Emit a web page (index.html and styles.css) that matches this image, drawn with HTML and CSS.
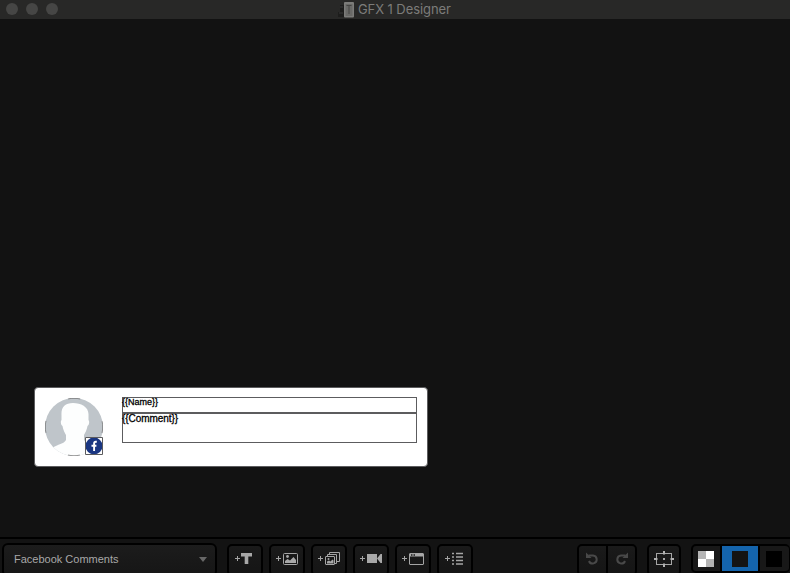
FILE: index.html
```html
<!DOCTYPE html>
<html lang="en">
<head>
<meta charset="utf-8">
<title>GFX 1 Designer</title>
<link rel="stylesheet" href="styles.css">
</head>
<body>
<div class="window">
  <header class="titlebar">
    <div class="lights"><i></i><i></i><i></i></div>
    <div class="title">
      <svg width="18" height="18" viewBox="0 0 18 18"><path d="M2 4h4v12H0v-5h2z" fill="#1d1d1c"/><path d="M2 6h3M1 12h4" stroke="#393938"/><rect x="6" y="1" width="10" height="15.500" rx="1" fill="#7c7c7a"/><rect x="7.500" y="3" width="7" height="12" fill="#696967"/><path d="M8.500 4.500h5M11 4v9" stroke="#444442"/></svg>
      <span>GFX 1 Designer</span>
    </div>
  </header>
  <main class="canvas">
    <section class="card">
      <svg class="avatar" width="58" height="58" viewBox="0 0 58 58">
        <defs><clipPath id="disc"><circle cx="29" cy="29" r="29"/></clipPath></defs>
        <g clip-path="url(#disc)">
          <path fill="#bfc5ca" d="M0 0h58v58H0z"/>
          <path fill="#fdfefe" d="M28 5c-8 0-12 4-11.500 12v5c-1 1-1 5 1 6 1 5 2.500 7 3.500 9v5c-2 4-8 4-14 8v9h46v-9c-6-4-12-4-14-8v-5c1-2 2.500-4 3.500-9 2-1 2-5 1-6v-5C44 9 36 5 28 5z"/>
        </g>
        <circle cx="29" cy="29" r="28.700" fill="none" stroke="#555" stroke-width=".6" stroke-dasharray="12 33.080" stroke-dashoffset="6"/>
      </svg>
      <svg class="badge" width="18" height="18" viewBox="0 0 18 18">
        <path fill="#fff" d="M0 0h18v18H0z"/><circle cx="9" cy="9" r="8.500" fill="#1a3682"/>
        <path d="M11.800 4.800h-1c-1.300 0-1.700.6-1.700 1.800V14M6.500 8.700h4.900" fill="none" stroke="#fff" stroke-width="1.900"/>
        <path d="M.5.5h17v17H.5z" fill="none" stroke="#5b5b5d"/>
      </svg>
      <div class="field name">{{Name}}</div>
      <div class="field comment">{{Comment}}</div>
    </section>
  </main>
  <footer class="toolbar">
    <div class="select"><span>Facebook Comments</span><svg width="8" height="5" viewBox="0 0 8 5"><path d="M0 0h8L4 5z" fill="#686868"/></svg></div>
    <div class="tools">
      <div class="btn"><svg width="32" height="28" viewBox="0 0 32 28"><path class="l" d="M6 12.500h5M8.500 10v5"/><path class="f" d="M12 7h11v3.500h-3.700V18h-3.600v-7.500H12z"/></svg></div>
      <div class="btn"><svg width="32" height="28" viewBox="0 0 32 28"><path class="l" d="M5 12.500h5M7.500 10v5"/><rect class="l" x="12.500" y="7.500" width="14" height="11" rx="1"/><circle class="f" cx="16.500" cy="10.500" r="1.400"/><path class="f" d="M14 17v-2l2.500-2 2.500 1.500 3.500-3.500 2.500 3v3z"/></svg></div>
      <div class="btn"><svg width="32" height="28" viewBox="0 0 32 28"><path class="l" d="M5 12.500h5M7.500 10v5M14.500 10V8.500h9v9H22M16.500 8V6.500h10v9H24"/><rect class="l" x="12.500" y="10.500" width="9" height="8" rx=".5"/><circle class="f" cx="15.500" cy="13" r="1"/><path class="f" d="M14 17.500v-2l2-1 1.500 1 2-2 1 1v3z"/></svg></div>
      <div class="btn"><svg width="32" height="28" viewBox="0 0 32 28"><path class="l" d="M5 12.500h5M7.500 10v5"/><path class="f" d="M12 8h10v9H12zM22 12.500 25.500 8H27v9h-1.500z"/></svg></div>
      <div class="btn"><svg width="32" height="28" viewBox="0 0 32 28"><path class="l" d="M5 12.500h5M7.500 10v5"/><rect class="l" x="12.500" y="7.500" width="14" height="11" rx=".5"/><path class="f" d="M13 8h13v2.500H13z"/><path d="M14 9h1.500M16.500 9H18" stroke="#181818" stroke-width="1.500"/></svg></div>
      <div class="btn"><svg width="32" height="28" viewBox="0 0 32 28"><path class="l" d="M6 12.500h5M8.500 10v5"/><path class="l" d="M13 7.500h2M17 7.500h7M13 11h2M17 11h7M13 14.500h2M17 14.500h7M13 18h2M17 18h7" stroke-width="1.400"/></svg></div>
    </div>
    <div class="history">
      <div class="btn"><svg width="27" height="28" viewBox="0 0 27 28"><path d="M9.500 9.500h4.500a4 4 0 1 1-4 5.500" fill="none" stroke="#494949" stroke-width="2"/><path d="M7 6.500V12h5.500z" fill="#494949"/></svg></div>
      <div class="btn"><svg width="27" height="28" viewBox="0 0 27 28"><path d="M17.500 9.500H13a4 4 0 1 0 4 5.500" fill="none" stroke="#494949" stroke-width="2"/><path d="M20 6.500V12h-5.500z" fill="#494949"/></svg></div>
    </div>
    <div class="btn frame"><svg width="30" height="28" viewBox="0 0 30 28"><rect class="l" x="7.500" y="7.500" width="15" height="11"/><path d="M15 5v3.500M15 17.500V21M5 13h3.500M21.500 13H25" stroke="#b2b2b2" stroke-width="2"/><path class="f" d="M14 12h2v2h-2z"/></svg></div>
    <div class="backgrounds">
      <div class="bg first"><i class="swatch checker"></i></div>
      <div class="bg active"><i class="swatch dark"></i></div>
      <div class="bg last"><i class="swatch black"></i></div>
    </div>
  </footer>
</div>
</body>
</html>
```
FILE: styles.css
```css
* { box-sizing: border-box; }
body { margin: 0; background: #121212; font-family: "Liberation Sans", Arial, sans-serif; }
svg { display: block; flex: none; }
.window { width: 790px; height: 573px; overflow: hidden; display: flex; flex-direction: column; }
.titlebar { height: 19px; flex: none; background: #282827; display: grid; grid-template-columns: 338px 1fr; }
.lights { display: flex; gap: 8px; padding: 3px 0 0 6px; }
.lights i { width: 12px; height: 12px; border-radius: 50%; background: #464645; }
.title { display: flex; align-items: center; gap: 2px; color: #7c7c7a; font: 13px/19px Inter, sans-serif; letter-spacing: -.08px; white-space: nowrap; }
.canvas { position: relative; flex: none; height: 518px; background: #121212; }
.card { position: absolute; left: 34px; top: 368px; width: 394px; height: 80px; border: 1px solid #5c5c5e; background: #fff; border-radius: 4px; }
.avatar { position: absolute; left: 10px; top: 10px; }
.badge { position: absolute; left: 50px; top: 49px; }
.field { position: absolute; left: 87px; width: 295px; border: 1px solid #5c5c5e; color: #000; white-space: nowrap; text-indent: -1px; -webkit-text-stroke: .3px #000; }
.name { top: 9px; height: 16px; font-size: 9px; line-height: 9px; }
.comment { top: 25px; height: 30px; font-size: 10px; line-height: 10px; letter-spacing: -.06px; }
.toolbar { height: 36px; flex: none; border-top: 2px solid #000; background: #131313; display: flex; align-items: flex-start; padding: 4px 0 0 2px; }
.select { width: 215px; height: 34px; border: 2px solid #000; border-radius: 6px; background: linear-gradient(#1c1c1c, #161616); display: flex; align-items: center; justify-content: space-between; padding: 0 8px 2px 10px; color: #a8a8a8; font-size: 11px; }
.tools { display: flex; gap: 6px; margin: 1px 0 0 10px; }
.btn { height: 32px; width: 36px; border: 2px solid #000; border-radius: 5px; background: linear-gradient(#1a1a1a, #151515); }
.l { fill: none; stroke: #a5a5a5; }
.f { fill: #a8a8a8; }
.history { display: flex; margin: 1px 0 0 104px; }
.history .btn { width: 31px; }
.history .btn:first-child { border-radius: 5px 0 0 5px; }
.history .btn:last-child { border-radius: 0 5px 5px 0; margin-left: -2px; }
.frame { width: 34px; margin: 1px 0 0 10px; }
.backgrounds { display: flex; width: 99px; height: 29px; margin: 1px 0 0 10px; border: 2px solid #000; border-right-width: 1px; border-radius: 5px; background: #181818; }
.bg { width: 29px; display: flex; align-items: center; justify-content: center; }
.bg.first { justify-content: flex-start; padding-left: 5px; border-right: 2px solid #000; }
.bg.last { width: 31px; justify-content: flex-start; padding-left: 6px; border-left: 2px solid #000; }
.bg.active { width: 36px; background: #1464ac; }
.swatch { width: 16px; height: 16px; flex: none; }
.checker { background: conic-gradient(#fff 25%, #b5b5b5 0 50%, #fff 0 75%, #b5b5b5 0); }
.dark { background: #141414; }
.black { background: #000; }
```
